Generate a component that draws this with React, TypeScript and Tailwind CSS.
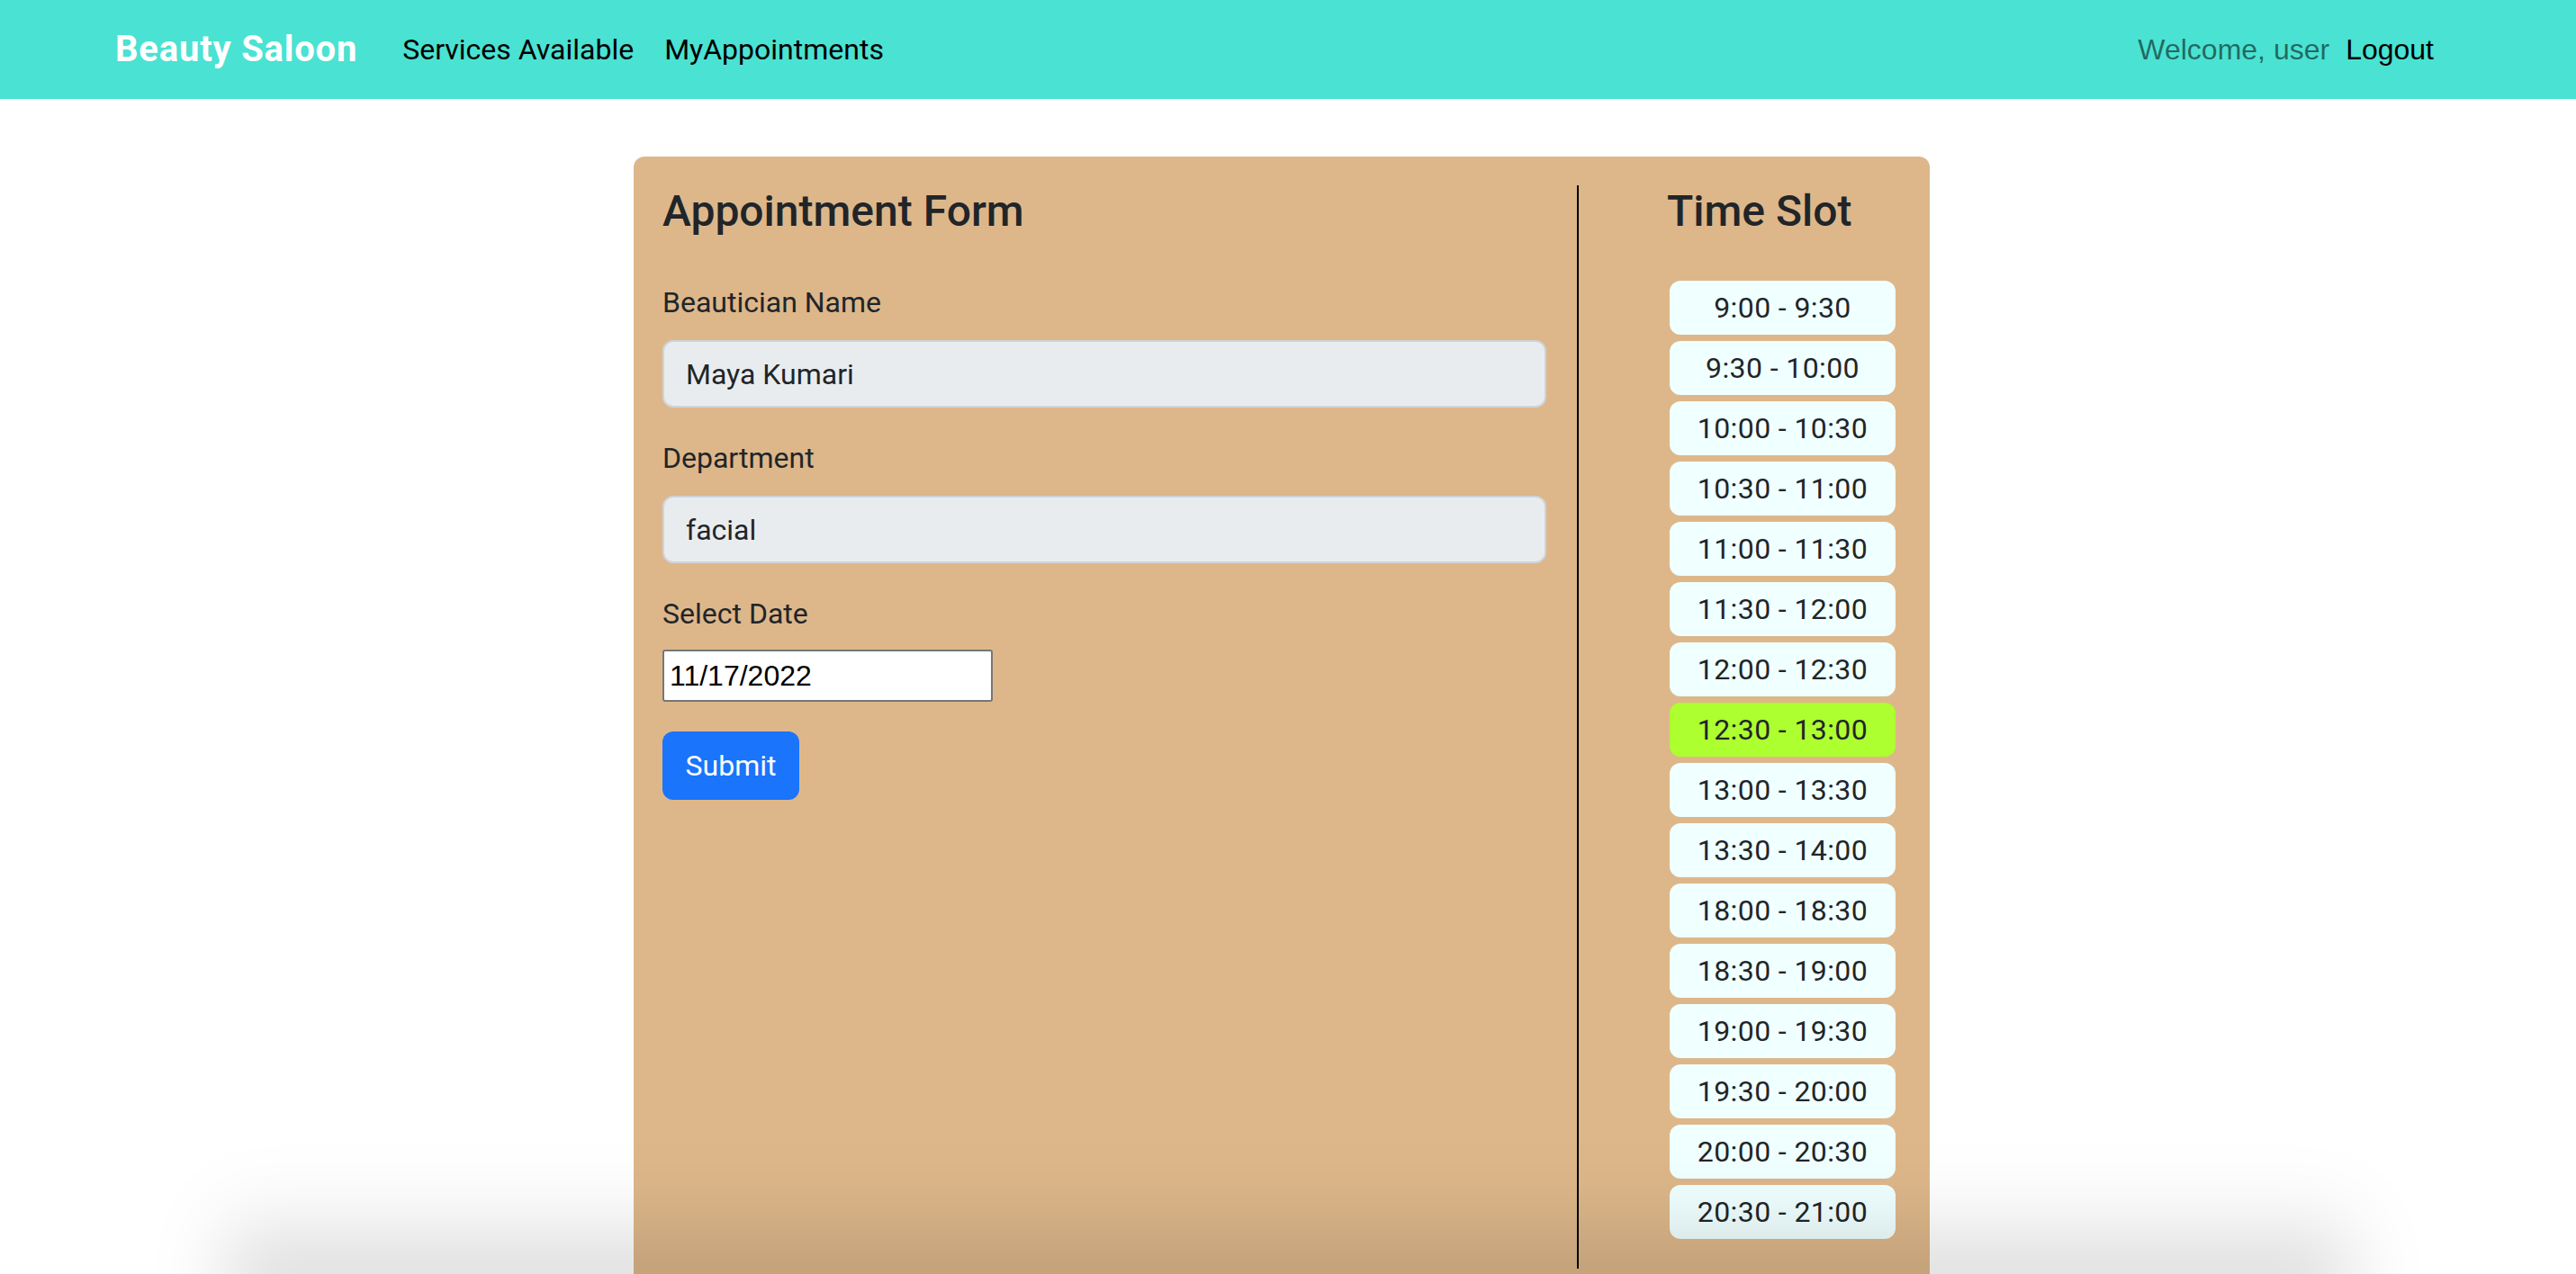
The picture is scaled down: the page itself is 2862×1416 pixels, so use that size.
import React from "react";

const slots = [
  "9:00 - 9:30",
  "9:30 - 10:00",
  "10:00 - 10:30",
  "10:30 - 11:00",
  "11:00 - 11:30",
  "11:30 - 12:00",
  "12:00 - 12:30",
  "12:30 - 13:00",
  "13:00 - 13:30",
  "13:30 - 14:00",
  "18:00 - 18:30",
  "18:30 - 19:00",
  "19:00 - 19:30",
  "19:30 - 20:00",
  "20:00 - 20:30",
  "20:30 - 21:00",
];

const selected = "12:30 - 13:00";

function Navbar() {
  return (
    <nav className="flex h-[110px] items-center bg-[#4ae2d2] pl-[128px] pr-[158px] font-['Roboto',sans-serif]">
      <span className="text-[40px] font-bold tracking-[0.8px] text-white">Beauty Saloon</span>
      <a className="ml-[50px] text-[32px] text-black">Services Available</a>
      <a className="ml-[34px] text-[32px] text-black">MyAppointments</a>
      <div className="ml-auto flex items-center font-['Liberation_Sans',sans-serif] text-[32px]">
        <span className="text-black/55">Welcome, user</span>
        <button className="ml-[18px] text-black">Logout</button>
      </div>
    </nav>
  );
}

function Field({ label, value }: { label: string; value: string }) {
  return (
    <div className="mb-[32px]">
      <label className="mb-[18px] block text-[32px] leading-[48px]">{label}</label>
      <input
        readOnly
        value={value}
        className="h-[75px] w-full rounded-[12px] border-2 border-[#ced4da] bg-[#e9ecef] px-[24px] text-[32px] text-[#212529] outline-none"
      />
    </div>
  );
}

export default function App() {
  return (
    <div className="relative h-[1416px] overflow-hidden bg-white text-[#212529] font-['Roboto',sans-serif]">
      <Navbar />
      <div className="mt-[64px] flex pl-[704px]">
        <div className="flex w-[1440px] rounded-[12px] bg-[#ddb78a] px-[32px] pb-[32px] pt-[32px]">
          <div className="w-[1016px] pr-[34px]">
            <h4 className="mb-[48px] text-[48px] font-medium leading-[58px]">Appointment Form</h4>
            <Field label="Beautician Name" value="Maya Kumari" />
            <Field label="Department" value="facial" />
            <label className="mb-[16px] block text-[32px] leading-[48px]">Select Date</label>
            <input
              readOnly
              value="11/17/2022"
              className="block h-[58px] w-[367px] rounded-[3px] border-2 border-[#767676] bg-white px-[6px] font-['Liberation_Sans',sans-serif] text-[32px] text-black outline-none"
            />
            <button className="mt-[33px] h-[76px] w-[152px] rounded-[12px] bg-[#1a74fc] text-[32px] text-white">
              Submit
            </button>
          </div>
          <div className="flex flex-col border-l-2 border-black pb-[33px] pl-[98px]">
            <h4 className="text-[48px] font-medium leading-[58px]">Time Slot</h4>
            <div className="ml-[3px] mt-[48px] flex w-[251px] flex-col gap-[7px]">
              {slots.map((s) => (
                <div
                  key={s}
                  className={
                    "flex h-[60px] items-center justify-center rounded-[12px] text-[32px] tracking-[0.4px] " +
                    (s === selected ? "bg-[#adff2f]" : "bg-[#f0ffff]")
                  }
                >
                  {s}
                </div>
              ))}
            </div>
          </div>
        </div>
      </div>
      <div className="pointer-events-none absolute bottom-[-40px] left-[250px] right-[250px] h-[130px] bg-gradient-to-t from-black/20 to-transparent blur-2xl" />
    </div>
  );
}
